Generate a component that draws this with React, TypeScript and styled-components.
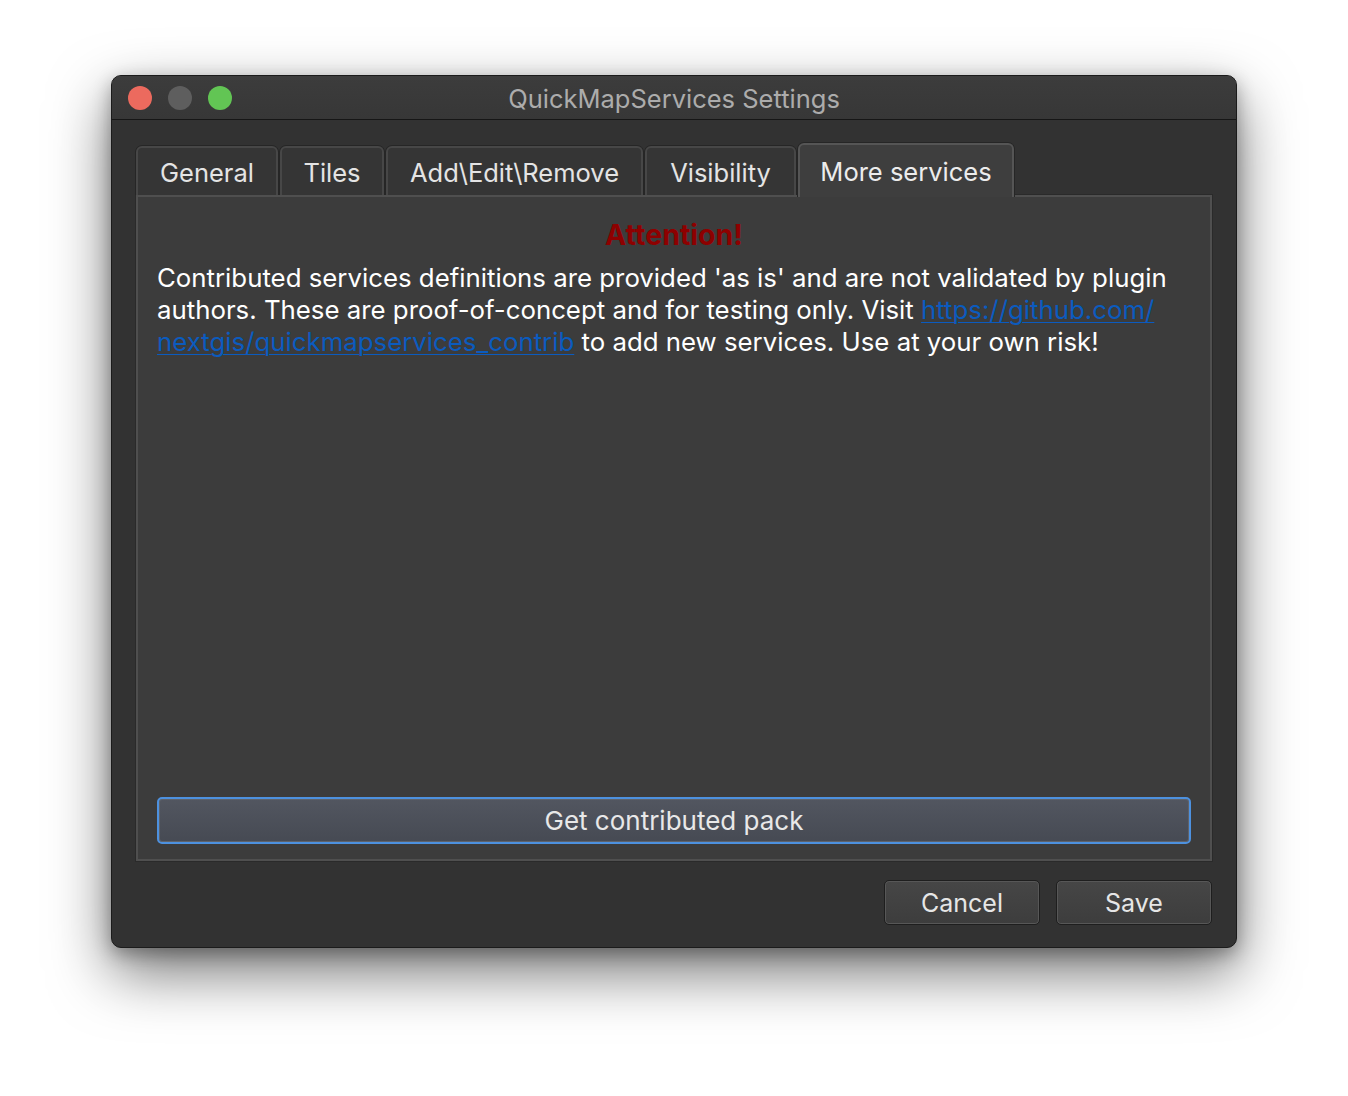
import React from "react";
import styled, { createGlobalStyle } from "styled-components";

const Global = createGlobalStyle`
  html, body { margin: 0; padding: 0; background: #ffffff; }
  body { font-family: "Inter", "Liberation Sans", sans-serif; }
`;

const Page = styled.div`
  width: 1348px;
  height: 1096px;
  display: flex;
  flex-direction: column;
  align-items: center;
  padding-top: 75px;
  box-sizing: border-box;
`;

const Window = styled.div`
  width: 1126px;
  height: 873px;
  box-sizing: border-box;
  border-radius: 10px;
  background: #323232;
  border: 1px solid #1b1b1b;
  box-shadow: 0 24px 60px rgba(0, 0, 0, 0.55), 0 6px 18px rgba(0, 0, 0, 0.3),
    inset 0 1px 0 rgba(255, 255, 255, 0.12);
  display: flex;
  flex-direction: column;
  overflow: hidden;
`;

const TitleBar = styled.div`
  height: 43px;
  flex: none;
  display: flex;
  align-items: center;
  position: relative;
  background: linear-gradient(#3c3c3c, #373737);
  border-bottom: 1px solid #161616;
  padding-left: 16px;
  gap: 16px;
`;

const Light = styled.span<{ $color: string }>`
  width: 24px;
  height: 24px;
  border-radius: 50%;
  background: ${(p) => p.$color};
`;

const Title = styled.div`
  position: absolute;
  left: 0;
  right: 0;
  text-align: center;
  font-size: 25.5px;
  color: #acacac;
  pointer-events: none;
  padding-top: 2px;
`;

const Body = styled.div`
  flex: 1;
  display: flex;
  flex-direction: column;
  padding: 23px 24px 22px 23px;
`;

const TabBar = styled.div`
  display: flex;
  align-items: flex-end;
  gap: 2px;
  height: 52px;
  padding-left: 1px;
  position: relative;
  z-index: 1;
`;

const Tab = styled.div<{ $active?: boolean; $w: number }>`
  width: ${(p) => p.$w}px;
  box-sizing: border-box;
  height: ${(p) => (p.$active ? 54 : 49)}px;
  margin-bottom: ${(p) => (p.$active ? -2 : 0)}px;
  display: flex;
  align-items: ${(p) => (p.$active ? "flex-start" : "center")};
  padding-top: ${(p) => (p.$active ? 11 : 2)}px;
  justify-content: center;
  font-size: 25.5px;
  color: ${(p) => (p.$active ? "#ececec" : "#e4e4e4")};
  background: ${(p) => (p.$active ? "#3e3e3e" : "#353535")};
  border: 2px solid ${(p) => (p.$active ? "#555555" : "#474747")};
  border-bottom: none;
  border-radius: 6px 6px 0 0;
  box-shadow: 0 -1px 0 #262626, -1px 0 0 #262626, 1px 0 0 #262626;
`;

const Pane = styled.div`
  flex: 1;
  box-sizing: border-box;
  margin-left: 1px;
  background: #3c3c3c;
  border: 2px solid #4f4f4f;
  box-shadow: 0 0 0 1px #2a2a2a;
  display: flex;
  flex-direction: column;
  padding: 20px 19px 15px 19px;
`;

const Attention = styled.div`
  text-align: center;
  color: #8e0000;
  font-weight: 700;
  font-size: 28.5px;
  line-height: 30px;
  margin-top: 3px;
  margin-bottom: 12px;
`;

const Message = styled.p`
  margin: 0;
  color: #ffffff;
  font-size: 25.8px;
  line-height: 32px;
  white-space: nowrap;
  flex: 1;
`;

const Link = styled.a`
  color: #0b5bbf;
  text-decoration: underline;
  text-decoration-thickness: 1px;
  text-underline-offset: 3px;
`;

const WideButton = styled.button`
  height: 47px;
  box-sizing: border-box;
  border-radius: 5px;
  border: 2px solid #4d91df;
  background: linear-gradient(#525660, #464a53);
  box-shadow: inset 0 0 0 1px #5f636b;
  color: #e8e8e8;
  font-family: inherit;
  font-size: 26px;
  padding: 0;
`;

const Footer = styled.div`
  display: flex;
  justify-content: flex-end;
  gap: 16px;
  margin-top: 19px;
`;

const Button = styled.button`
  width: 156px;
  height: 45px;
  box-sizing: border-box;
  border-radius: 5px;
  border: 1px solid #1e1e1e;
  background: linear-gradient(#464646, #3d3d3d);
  box-shadow: inset 0 0 0 1px #575757;
  color: #e6e6e6;
  font-family: inherit;
  font-size: 25px;
  padding: 0;
`;

const tabs = [
  { label: "General", w: 142 },
  { label: "Tiles", w: 104 },
  { label: "Add\\Edit\\Remove", w: 257 },
  { label: "Visibility", w: 151 },
  { label: "More services", w: 216, active: true },
];

export default function App() {
  return (
    <Page>
      <Global />
      <Window>
        <TitleBar>
          <Light $color="#ec6a5e" />
          <Light $color="#5e5e5e" />
          <Light $color="#62c554" />
          <Title>QuickMapServices Settings</Title>
        </TitleBar>
        <Body>
          <TabBar>
            {tabs.map((t) => (
              <Tab key={t.label} $w={t.w} $active={t.active}>
                {t.label}
              </Tab>
            ))}
          </TabBar>
          <Pane>
            <Attention>Attention!</Attention>
            <Message>
              Contributed services definitions are provided 'as is' and are not validated by plugin
              <br />
              authors. These are proof-of-concept and for testing only. Visit{" "}
              <Link href="#">
                https://github.com/
                <br />
                nextgis/quickmapservices_contrib
              </Link>{" "}
              to add new services. Use at your own risk!
            </Message>
            <WideButton>Get contributed pack</WideButton>
          </Pane>
          <Footer>
            <Button>Cancel</Button>
            <Button>Save</Button>
          </Footer>
        </Body>
      </Window>
    </Page>
  );
}
